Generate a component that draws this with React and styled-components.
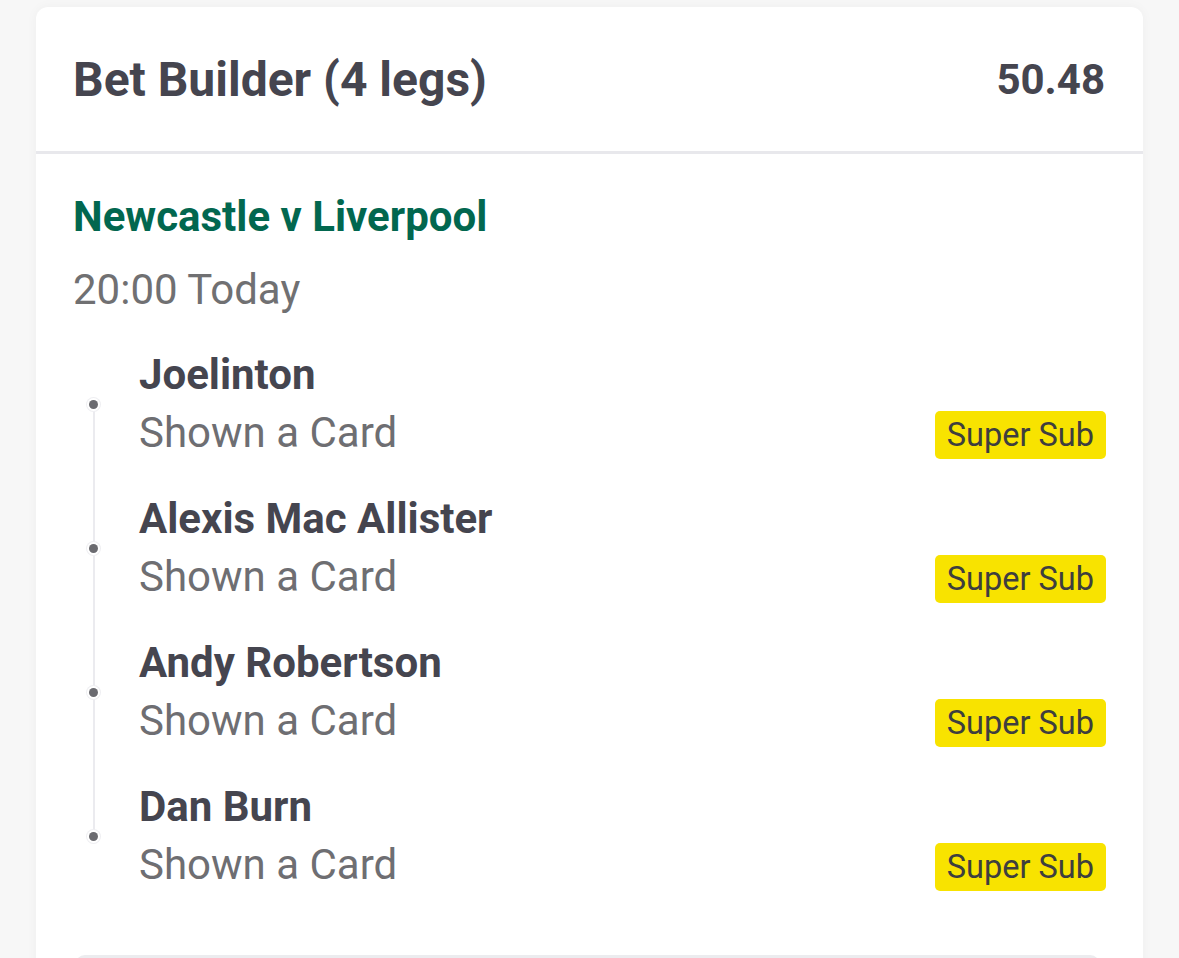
import React from 'react'
import styled, { createGlobalStyle } from 'styled-components'

const Global = createGlobalStyle`
  html, body {
    margin: 0;
    padding: 0;
    background: #f7f7f7;
    font-family: Roboto, "Liberation Sans", Arial, sans-serif;
  }
`;

const Page = styled.div`
  padding: 7px 36px 0 36px;
`;

const Card = styled.div`
  background: #ffffff;
  border-radius: 12px;
  box-shadow: 0 0 12px rgba(0, 0, 0, 0.04);
  overflow: hidden;
`;

const Header = styled.div`
  display: flex;
  align-items: center;
  justify-content: space-between;
  height: 144px;
  padding: 0 38px 0 37px;
  border-bottom: 3px solid #e8e8ec;
  color: #45454f;
  font-weight: 700;

  h1 {
    margin: 0;
    font-size: 48px;
    font-weight: 700;
  }

  .odds {
    font-size: 42px;
  }
`;

const Body = styled.div`
  padding: 38px 37px 0 37px;
`;

const Match = styled.div`
  color: #02674f;
  font-size: 42px;
  font-weight: 700;
  line-height: 50px;
`;

const Time = styled.div`
  margin-top: 23px;
  color: #707072;
  font-size: 42px;
  line-height: 50px;
`;

const Legs = styled.div`
  margin-top: 31px;
`;

const Leg = styled.div`
  position: relative;
  padding-left: 66px;
  padding-bottom: 28px;

  /* timeline dot */
  &::before {
    content: '';
    position: absolute;
    left: 16px;
    top: 54px;
    width: 9px;
    height: 9px;
    border-radius: 50%;
    background: #6b6b70;
    box-shadow: 0 0 0 2px #ffffff, 0 0 0 3px #efeff2;
    z-index: 1;
  }

  /* line to the next dot */
  &:not(:last-child)::after {
    content: '';
    position: absolute;
    left: 20px;
    top: 59px;
    width: 2px;
    height: 144px;
    background: #ebebef;
  }
`;

const Player = styled.div`
  color: #45454f;
  font-size: 42px;
  font-weight: 700;
  line-height: 58px;
`;

const Market = styled.div`
  display: flex;
  align-items: center;
  justify-content: space-between;
  color: #6e6e72;
  font-size: 42px;
  line-height: 58px;
`;

const Badge = styled.span`
  display: inline-flex;
  align-items: center;
  height: 48px;
  padding: 0 12px;
  margin-top: 4px;
  border-radius: 5px;
  background: #f8e300;
  color: #3e3e3e;
  font-size: 32.5px;
`;

const NextBox = styled.div`
  margin: 33px 6px 0 2px;
  height: 80px;
  border: 3px solid #ececef;
  border-radius: 10px;
`;

const legs = ['Joelinton', 'Alexis Mac Allister', 'Andy Robertson', 'Dan Burn']

export default function App() {
  return (
    <>
      <Global />
      <Page>
        <Card>
          <Header>
            <h1>Bet Builder (4 legs)</h1>
            <span className="odds">50.48</span>
          </Header>
          <Body>
            <Match>Newcastle v Liverpool</Match>
            <Time>20:00 Today</Time>
            <Legs>
              {legs.map((name) => (
                <Leg key={name}>
                  <Player>{name}</Player>
                  <Market>
                    <span>Shown a Card</span>
                    <Badge>Super Sub</Badge>
                  </Market>
                </Leg>
              ))}
            </Legs>
            <NextBox />
          </Body>
        </Card>
      </Page>
    </>
  )
}
